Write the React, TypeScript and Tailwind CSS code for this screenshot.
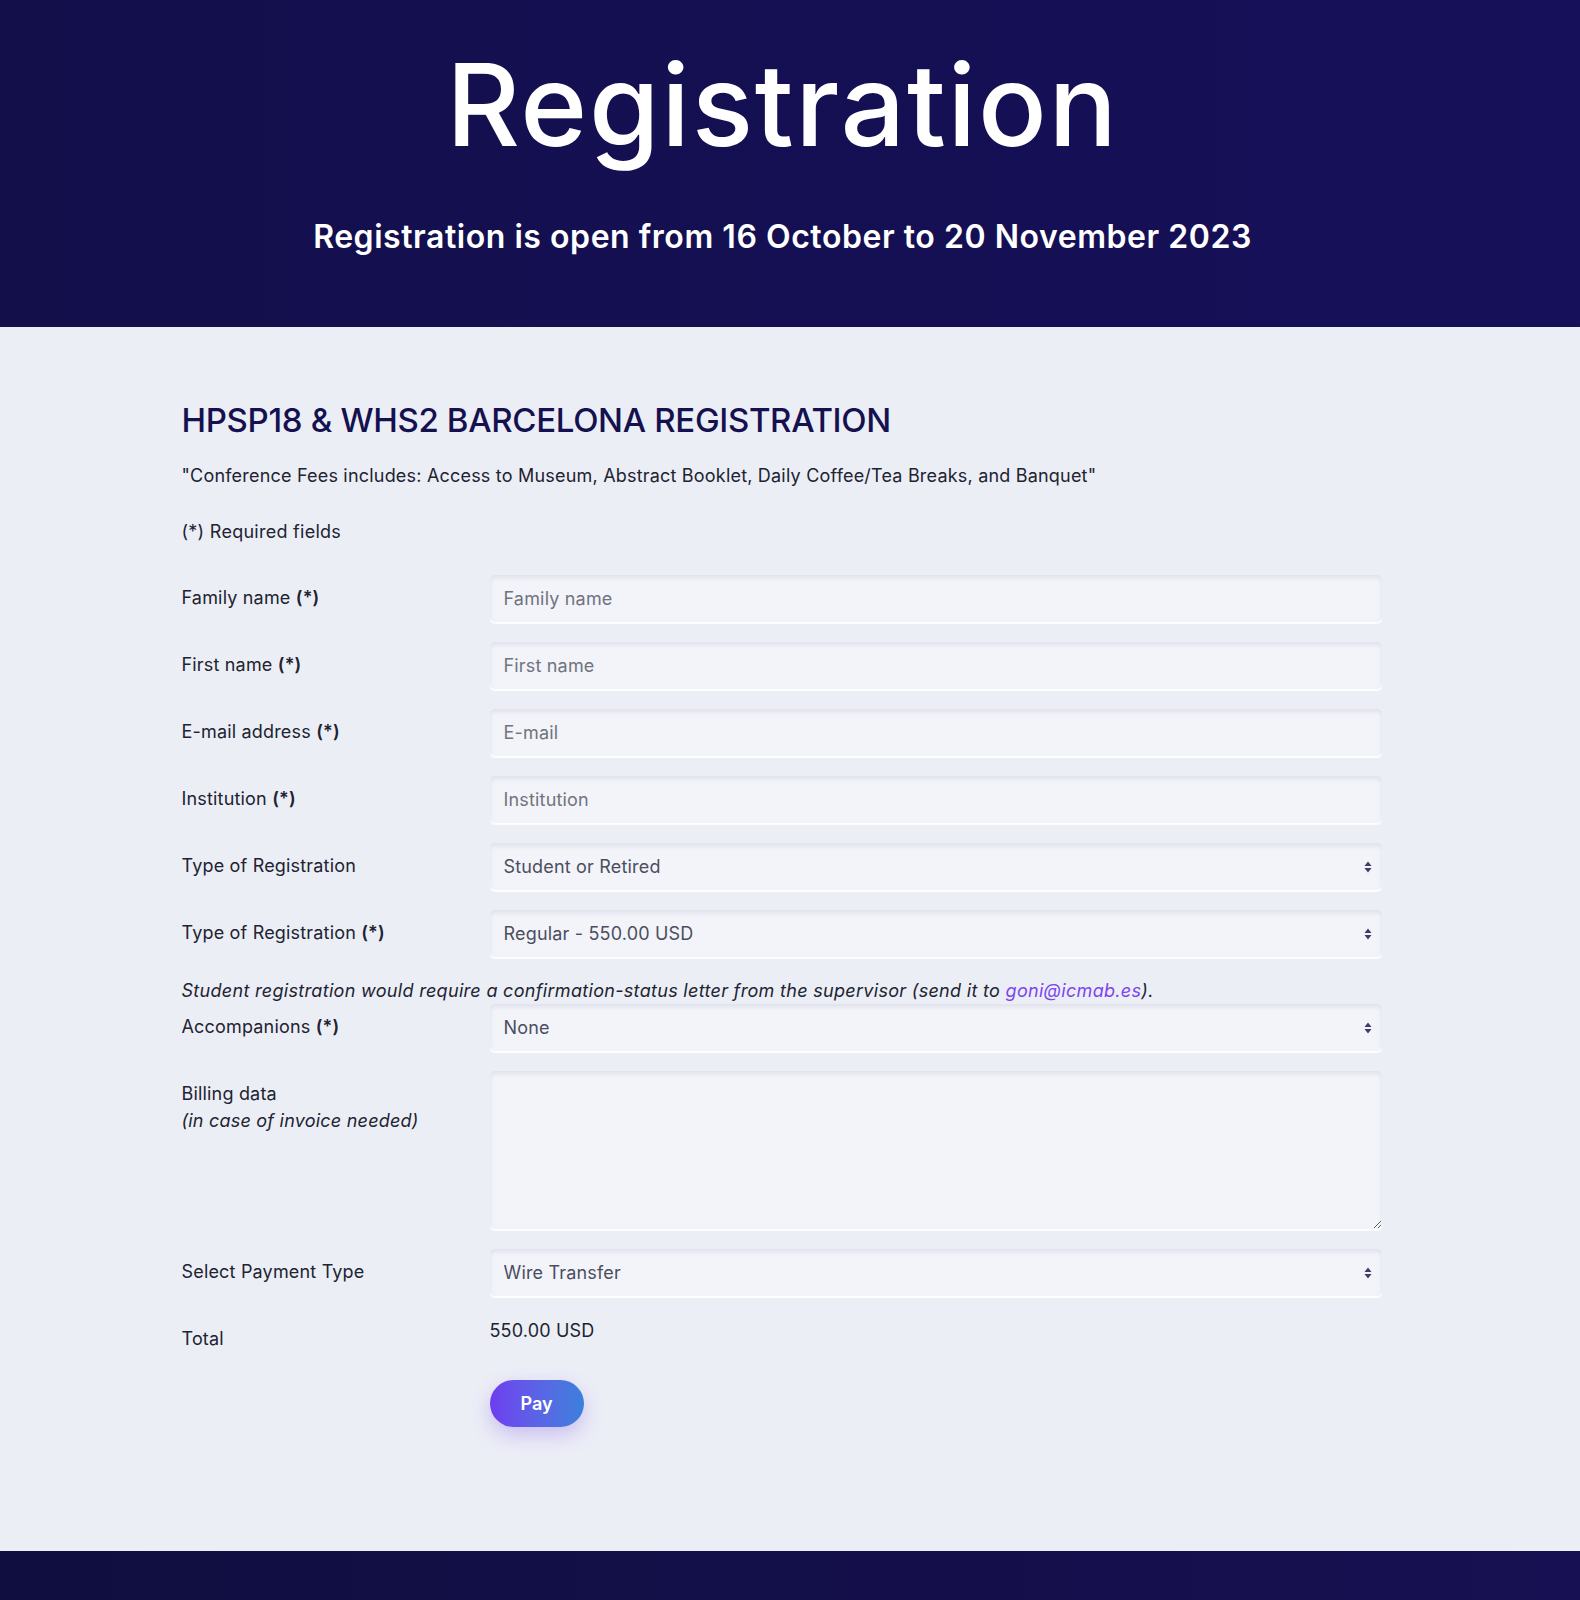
import { ReactNode } from "react";

const font = { fontFamily: "Inter, 'Noto Sans', 'Liberation Sans', sans-serif" };

function Arrows() {
  return (
    <svg
      className="pointer-events-none absolute right-[10px] top-1/2 -translate-y-1/2"
      width="8"
      height="12"
      viewBox="0 0 8 12"
    >
      <path d="M4 0.5 L7.5 5 L0.5 5 Z" fill="#3f3d68" />
      <path d="M4 11.5 L7.5 7 L0.5 7 Z" fill="#3f3d68" />
    </svg>
  );
}

const fieldCls =
  "w-full h-[47px] rounded-[5px] bg-[#f3f4f9] px-[14px] text-[18px] tracking-[0.01em] text-[#4b4e60] placeholder:text-[#70737f] outline-none shadow-[inset_0_3px_4px_rgba(176,180,204,0.28),0_2px_1px_rgba(255,255,255,0.9)]";

function Row({ label, children, mb = "mb-[20px]" }: { label: ReactNode; children: ReactNode; mb?: string }) {
  return (
    <div className={`grid grid-cols-[308px_1fr] ${mb}`}>
      <div className="pt-[9px] text-[18px] leading-[27px] tracking-[0.01em] text-[#212331]">{label}</div>
      <div>{children}</div>
    </div>
  );
}

function Select({ value, options }: { value: string; options: string[] }) {
  return (
    <div className="relative">
      <select defaultValue={value} className={`${fieldCls} appearance-none`}>
        {options.map((o) => (
          <option key={o}>{o}</option>
        ))}
      </select>
      <Arrows />
    </div>
  );
}

const Req = () => <b className="font-semibold">(*)</b>;

export default function App() {
  return (
    <div style={font} className="min-h-[1600px] bg-[#eceef6]">
      <header className="h-[327px] bg-gradient-to-r from-[#130f4b] to-[#16105a] pr-[15px]">
        <div className="pt-[48px] text-center text-white">
          <h1 className="text-[114px] font-medium leading-none tracking-[0.015em]">Registration</h1>
          <p className="mt-[59px] text-[32px] font-semibold leading-none tracking-[0.017em]">
            Registration is open from 16 October to 20 November 2023
          </p>
        </div>
      </header>

      <main className="pr-[17px] pt-[73px] pb-[124px]">
        <div className="mx-auto w-[1200px]">
          <h2 className="text-[33px] font-medium leading-[40px] text-[#15114f] tracking-[-0.01em]">
            HPSP18 &amp; WHS2 BARCELONA REGISTRATION
          </h2>
          <p className="mt-[22px] text-[18px] leading-[27px] tracking-[0.011em] text-[#212331]">
            "Conference Fees includes: Access to Museum, Abstract Booklet, Daily Coffee/Tea Breaks, and Banquet"
          </p>
          <p className="mt-[29px] mb-[30px] text-[18px] leading-[27px] tracking-[0.015em] text-[#212331]">
            (*) Required fields
          </p>

          <form>
            <Row label={<>Family name <Req /></>}>
              <input className={fieldCls} placeholder="Family name" />
            </Row>
            <Row label={<>First name <Req /></>}>
              <input className={fieldCls} placeholder="First name" />
            </Row>
            <Row label={<>E-mail address <Req /></>}>
              <input className={fieldCls} placeholder="E-mail" />
            </Row>
            <Row label={<>Institution <Req /></>}>
              <input className={fieldCls} placeholder="Institution" />
            </Row>
            <Row label="Type of Registration">
              <Select value="Student or Retired" options={["Student or Retired", "Regular"]} />
            </Row>
            <Row label={<>Type of Registration <Req /></>}>
              <Select value="Regular - 550.00 USD" options={["Regular - 550.00 USD"]} />
            </Row>

            <p className="text-[18px] italic leading-[27px] tracking-[0.017em] text-[#212331]">
              Student registration would require a confirmation-status letter from the supervisor (send it to{" "}
              <a href="#" className="text-[#7b45ee]">goni@icmab.es</a>).
            </p>

            <Row label={<>Accompanions <Req /></>}>
              <Select value="None" options={["None", "1", "2"]} />
            </Row>
            <Row
              label={
                <>
                  Billing data
                  <br />
                  <i className="tracking-[0.012em]">(in case of invoice needed)</i>
                </>
              }
            >
              <textarea className={`${fieldCls} h-[158px] py-[10px] block`} />
            </Row>
            <Row label="Select Payment Type">
              <Select value="Wire Transfer" options={["Wire Transfer", "Credit Card"]} />
            </Row>

            <div className="grid grid-cols-[308px_1fr]">
              <div className="pt-[9px] text-[18px] leading-[27px] tracking-[0.01em] text-[#212331]">Total</div>
              <div className="pt-px text-[18px] leading-[27px] tracking-[0.01em] text-[#212331]">550.00 USD</div>
            </div>
            <div className="grid grid-cols-[308px_1fr] mt-[28px]">
              <div />
              <div>
                <button
                  type="button"
                  className="h-[47px] w-[94px] rounded-full bg-gradient-to-r from-[#6e3cf0] to-[#3a80dc] text-[18px] font-semibold text-white shadow-[0_8px_20px_rgba(110,70,230,0.28)]"
                >
                  Pay
                </button>
              </div>
            </div>
          </form>
        </div>
      </main>

      <footer className="h-[120px] bg-gradient-to-r from-[#100e40] to-[#171052]" />
    </div>
  );
}
